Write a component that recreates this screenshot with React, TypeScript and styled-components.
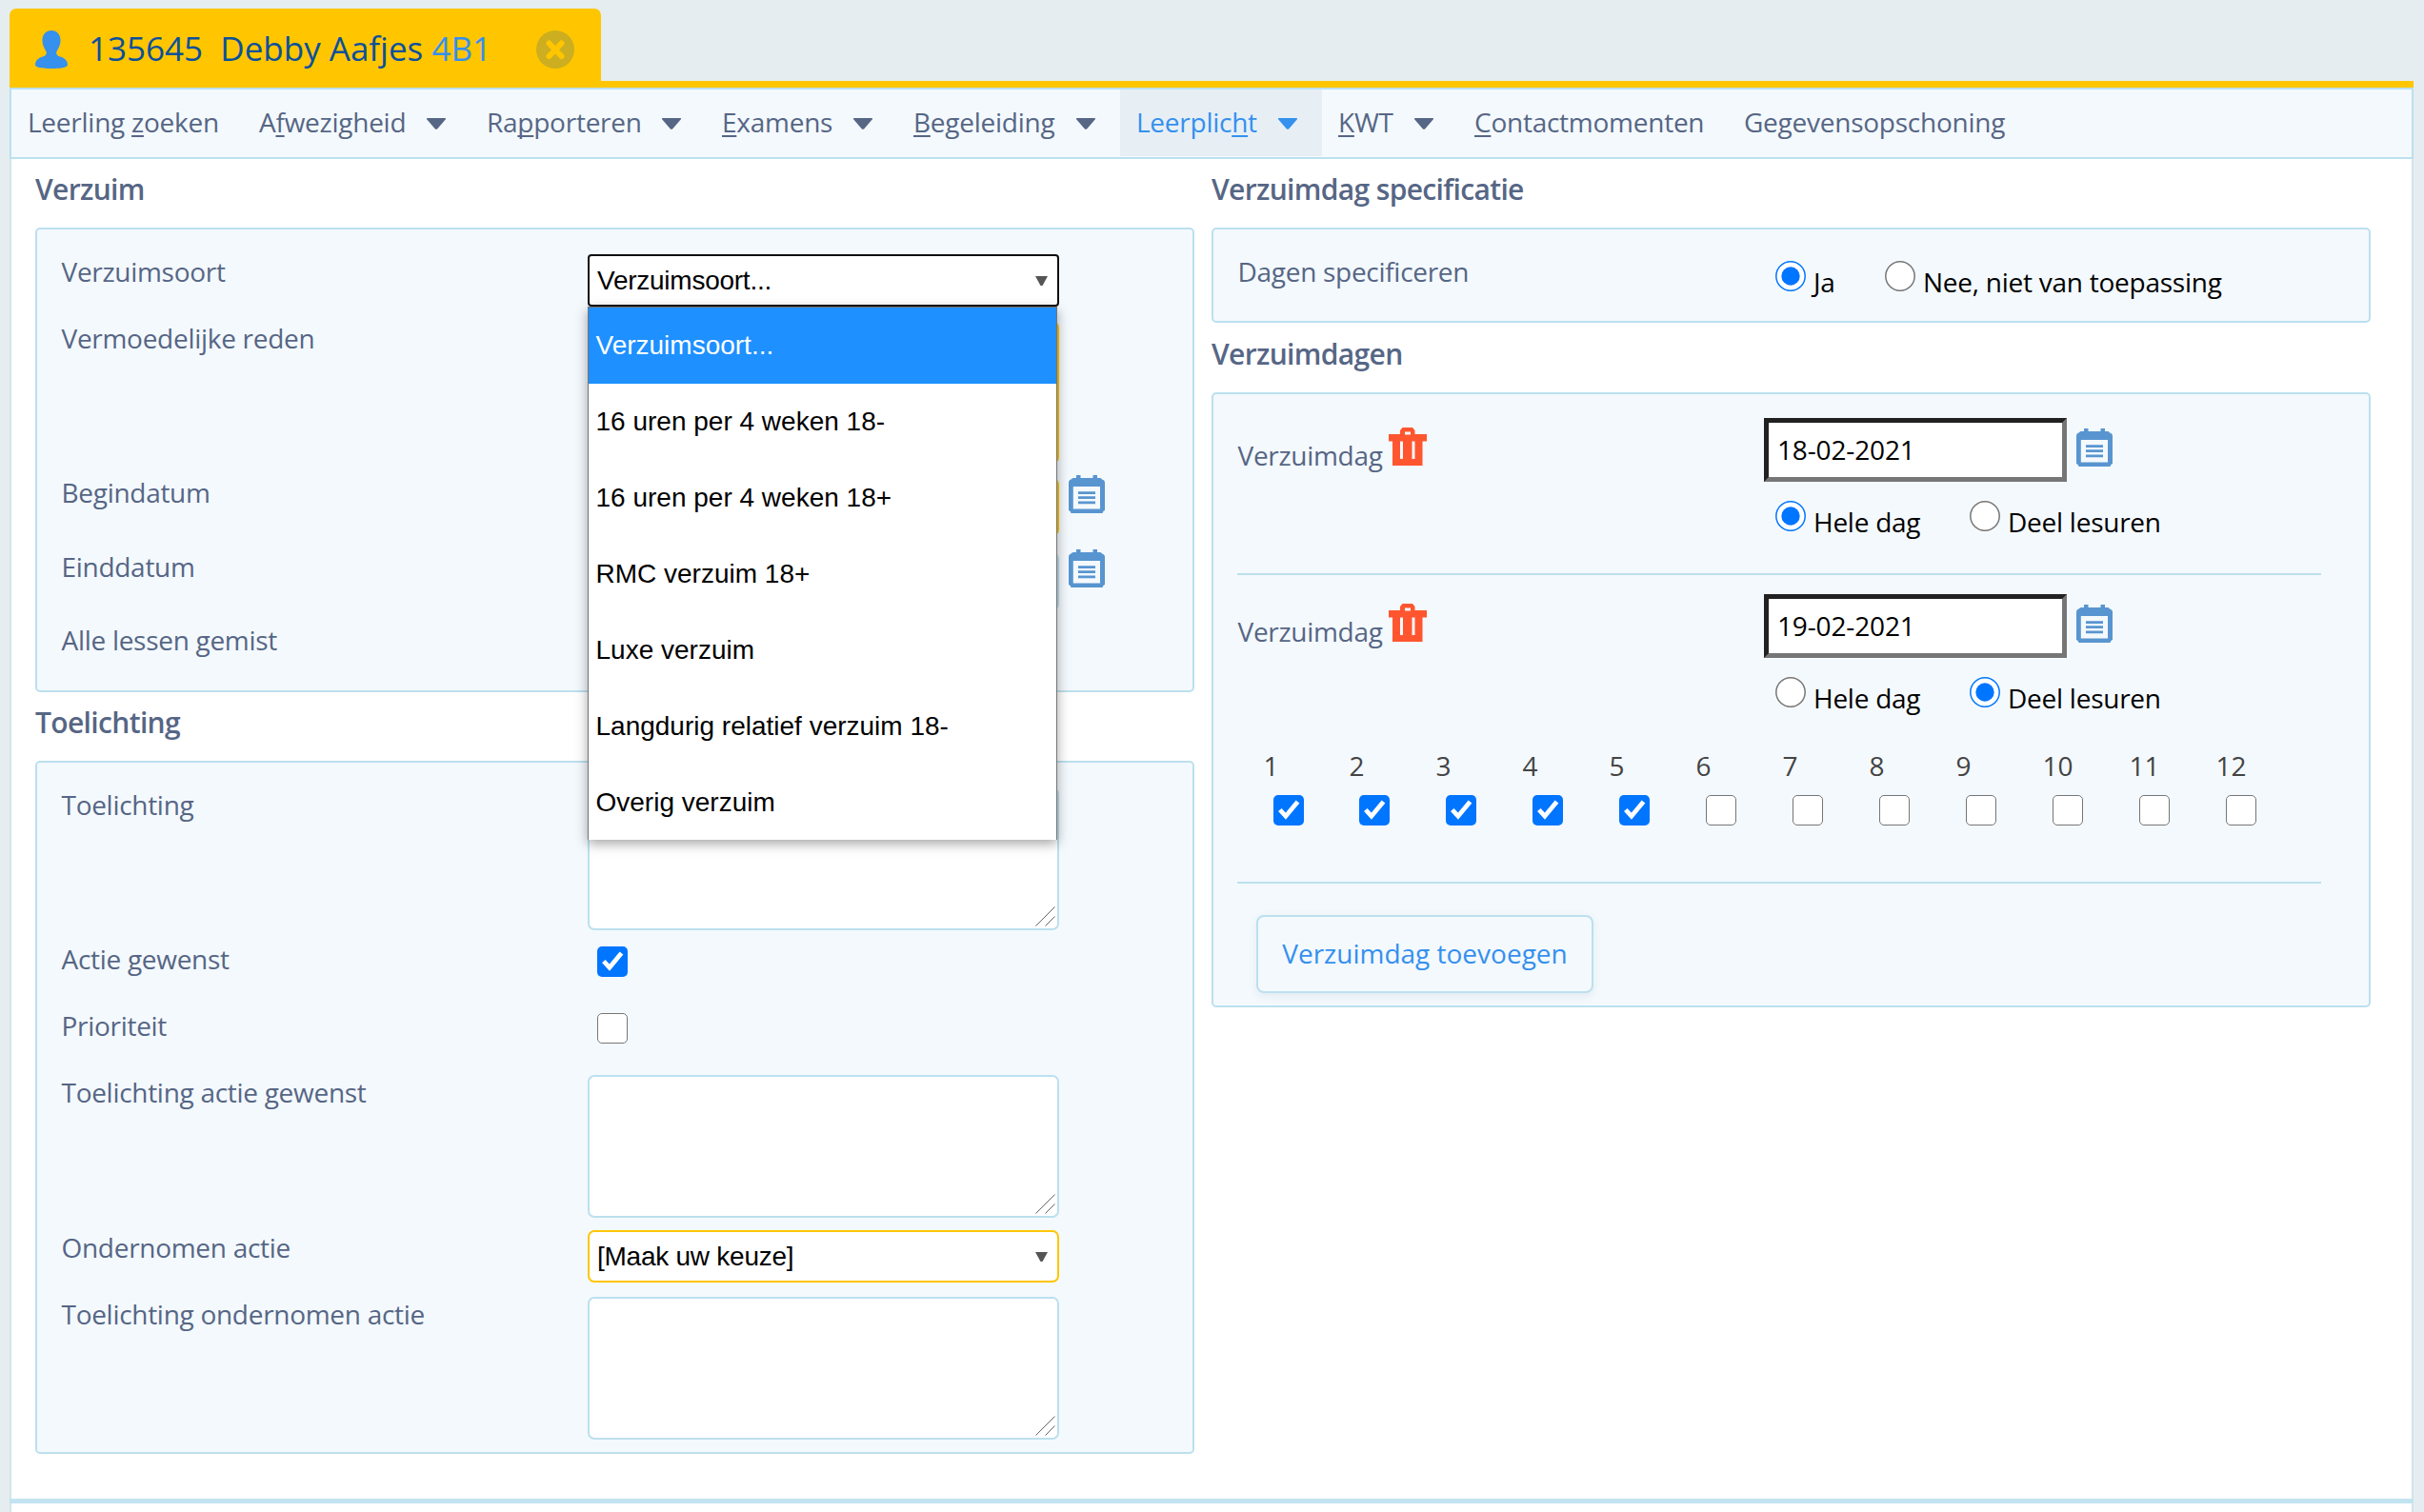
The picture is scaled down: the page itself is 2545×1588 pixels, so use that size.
import React from 'react';
import styled, { createGlobalStyle } from 'styled-components';

const c = {
  page: '#e5edf0',
  edge: '#d3e4ea',
  panel: '#f4f9fd',
  line: '#bce0ee',
  yellow: '#ffc600',
  label: '#566685',
  blue: '#3590ee',
  navy: '#0b509c',
  check: '#0075ff',
};

const Global = createGlobalStyle`
  * { box-sizing: border-box; }
  body { margin: 0; background: ${c.page}; font-family: "Open Sans", "Noto Sans", sans-serif; font-size: 28px; line-height: 36px; color: ${c.label}; }
`;

const Page = styled.div`
  display: flex;
  flex-direction: column;
  width: 2545px;
  height: 1588px;
  padding: 9px 11px 0 10px;
  overflow: hidden;
`;

const TabStrip = styled.header`
  display: flex;
  flex: none;
  height: 83px;
  border-bottom: 7px solid ${c.yellow};
`;

const Tab = styled.div`
  display: flex;
  width: 621px;
  padding: 23px 27px 0;
  background: ${c.yellow};
  border-radius: 7px 7px 0 0;
  svg { flex: none; display: block; }
`;

const TabTitle = styled.div`
  display: flex;
  width: 470px;
  margin: -4px 0 0 22px;
  font-size: 35px;
  line-height: 46px;
  color: ${c.navy};
  white-space: pre;
`;

const ClassName = styled.span`
  color: ${c.blue};
`;

const Nav = styled.nav`
  display: flex;
  flex: none;
  height: 75px;
  background: ${c.panel};
  border: 2px solid ${c.line};
`;

const NavItem = styled.a<{ $active?: boolean; $width: number }>`
  display: flex;
  flex: none;
  height: 70px;
  width: ${(p) => p.$width}px;
  padding: 16px 26px 0 17px;
  justify-content: space-between;
  white-space: nowrap;
  letter-spacing: -0.25px;
  color: ${(p) => (p.$active ? c.blue : c.label)};
  background: ${(p) => (p.$active ? '#e7eff5' : 'transparent')};
  u { text-decoration-thickness: 2px; text-underline-offset: 3px; text-decoration-skip-ink: none; }
  svg { flex: none; margin-top: 14px; }
`;

const Body = styled.main`
  display: flex;
  flex: none;
  gap: 18px;
  height: 1407px;
  padding-left: 25px;
  background: #fff;
  border: 2px solid ${c.edge};
  border-width: 0 2px;
`;

const Footer = styled.footer`
  flex: 1;
  background: #fff;
  border-top: 5px solid #c2e3f0;
  box-shadow: inset 2px 0 ${c.edge}, inset -2px 0 ${c.edge};
`;

const Column = styled.section`
  width: 1217px;
`;

const Heading = styled.h2<{ $tall?: boolean }>`
  height: ${(p) => (p.$tall ? 73 : 72)}px;
  margin: 0;
  padding-top: ${(p) => (p.$tall ? 13 : 12)}px;
  font-size: 30px;
  line-height: 40px;
  font-weight: 600;
  letter-spacing: -0.65px;
`;

const Panel = styled.div<{ $top?: number; $height?: number }>`
  height: ${(p) => (p.$height ? `${p.$height}px` : 'auto')};
  padding: ${(p) => p.$top ?? 26}px 25px 0;
  background: ${c.panel};
  border: 2px solid ${c.line};
  border-radius: 5px;
`;

const Row = styled.div<{ $height: number }>`
  display: grid;
  grid-template-columns: 553px 1fr;
  align-items: start;
  height: ${(p) => p.$height}px;
`;

const Label = styled.div`
  display: flex;
  padding-left: 0.5px;
  white-space: nowrap;
  letter-spacing: -0.29px;
`;

const FieldWrap = styled.div`
  position: relative;
  display: flex;
`;

const SelectBox = styled.div<{ $open?: boolean }>`
  display: flex;
  justify-content: space-between;
  width: 495px;
  height: 55px;
  padding: 0 10px 0 8px;
  font-family: "Liberation Sans", Arial, sans-serif;
  line-height: 52px;
  letter-spacing: -0.25px;
  color: #000;
  background: #fff;
  border: 2px solid ${(p) => (p.$open ? '#101010' : c.yellow)};
  border-radius: ${(p) => (p.$open ? 4 : 7)}px;
  svg { margin-top: 21px; }
`;

const Area = styled.div<{ $required?: boolean }>`
  display: flex;
  align-items: flex-end;
  justify-content: flex-end;
  width: 495px;
  height: 150px;
  padding: 0 2px 2px 0;
  background: #fff;
  border: 2px solid ${(p) => (p.$required ? c.yellow : c.line)};
  border-radius: 7px;
`;

const TextInput = styled.div<{ $required?: boolean }>`
  width: 495px;
  height: 61px;
  margin: 3px 10px 0 0;
  background: #fff;
  border: 2px solid ${(p) => (p.$required ? c.yellow : c.line)};
  border-radius: 7px;
`;

const Options = styled.ul`
  position: absolute;
  z-index: 2;
  top: 55px;
  left: 0;
  width: 493px;
  height: 560px;
  margin: 0;
  padding: 0;
  list-style: none;
  overflow: visible;
  background: #fff;
  border: 1px solid #757575;
  border-bottom: 0;
  box-shadow: 0 4px 12px rgba(0, 0, 0, 0.36);
`;

const Option = styled.li<{ $selected?: boolean }>`
  height: 80px;
  padding-left: 7.5px;
  font-family: "Liberation Sans", Arial, sans-serif;
  line-height: 79px;
  white-space: nowrap;
  color: ${(p) => (p.$selected ? '#fff' : '#000')};
  background: ${(p) => (p.$selected ? '#1e90ff' : 'transparent')};
  &:last-child { height: 79px; }
`;

const Box = styled.span<{ $on?: boolean }>`
  display: block;
  flex: none;
  width: 32px;
  height: 32px;
  background: ${(p) => (p.$on ? c.check : '#fff')};
  border: ${(p) => (p.$on ? '0' : '1.5px solid #767676')};
  border-radius: 5px;
  svg { display: block; }
`;

const FormCheck = styled.div`
  padding: 5px 0 0 10px;
`;

const Radios = styled.div<{ $top: number }>`
  display: flex;
  margin: ${(p) => p.$top}px 0 0 12px;
  color: #000;
`;

const RadioItem = styled.div<{ $width: number }>`
  display: flex;
  gap: 8px;
  width: ${(p) => p.$width}px;
  white-space: nowrap;
  letter-spacing: -0.25px;
  span { margin-top: 4px; }
  svg { display: block; flex: none; }
`;

const DayBlock = styled.div<{ $height: number }>`
  width: 1138px;
  height: ${(p) => p.$height}px;
  padding-top: 20px;
  border-bottom: 2px solid ${c.line};
`;

const DayGrid = styled.div`
  display: grid;
  grid-template-columns: 553px 1fr;
  align-items: start;
`;

const DayLabel = styled.div`
  display: flex;
  letter-spacing: -0.29px;
  span { padding: 21px 0 0 0.5px; width: 159px; }
  svg { margin-top: 10px; }
`;

const DateRow = styled.div`
  display: flex;
  gap: 10px;
  svg { margin-top: 11px; }
`;

const DateInput = styled.div`
  width: 318px;
  height: 67px;
  padding: 10px 9px 0;
  color: #000;
  letter-spacing: -0.15px;
  background: #fff;
  border: 5px solid;
  border-color: #212121 #767676 #767676 #212121;
`;

const Hours = styled.div`
  display: grid;
  grid-template-columns: repeat(12, 91px);
  margin: 35px 0 0 26px;
  color: #444;
`;

const Hour = styled.div`
  display: flex;
  flex-direction: column;
  gap: 13px;
  padding-left: 0.5px;
  ${Box} { margin-left: 10.5px; }
  &:first-child { padding-left: 1.5px; }
`;

const AddButton = styled.button`
  display: block;
  width: 354px;
  height: 82px;
  margin: 33px 0 0 20px;
  padding: 0 0 2px;
  font: inherit;
  color: ${c.blue};
  white-space: nowrap;
  background: ${c.panel};
  border: 2px solid ${c.line};
  border-radius: 8px;
  box-shadow: 0 3px 10px rgba(60, 110, 130, 0.1);
`;

const Person = () => (
  <svg width="34" height="40" viewBox="0 0 34 40" fill={c.blue}>
    <path d="M17 0C23 0 26.5 4.5 26.5 10C26.5 15.500 24.500 18.500 22.500 22C21.600 25 23 26.500 26 27.500C31 29 34 31.500 34 36C34 39.500 25 40 17 40C9 40 0 39.500 0 36C0 31.500 3 29 8 27.500C11 26.500 12.400 25 11.500 22C9.500 18.500 7.500 15.500 7.500 10C7.500 4.500 11 0 17 0Z" />
  </svg>
);

const Close = () => (
  <svg width="40" height="40" viewBox="0 0 40 40">
    <circle cx="20" cy="20" r="20" fill="#ccae20" />
    <path d="M13.500 13.500L26.500 27M26.500 13.500L13.500 27" stroke={c.yellow} strokeWidth="6" strokeLinecap="round" />
  </svg>
);

const Caret = () => (
  <svg width="20" height="12" viewBox="0 0 20 12" fill="currentColor">
    <path d="M0.500 0H19.500Q20.500 0.500 19.700 1.600L11.300 11.200Q10 12.400 8.700 11.200L0.300 1.600Q-0.500 0.500 0.500 0Z" />
  </svg>
);

const SelectArrow = () => (
  <svg width="13" height="10" viewBox="0 0 13 10">
    <path d="M0 0H13L7.500 10H5.500Z" fill="#555" />
  </svg>
);

const Grip = () => (
  <svg width="21" height="21" viewBox="0 0 21 21" stroke="#555" strokeWidth="0.900">
    <path d="M0.500 20.500L20.500 0.500M10.500 20.500L20.500 10.500" />
  </svg>
);

const Calendar = () => (
  <svg width="38" height="40" viewBox="0 0 38 40">
    <path d="M8 0H12.500V3H25.500V0H30V3H33Q34.500 3 35 4.500Q38 5 38 8V37Q36 37.500 35.500 40H2.500Q2 37.500 0 37V8Q0 5 2.500 4.500Q3.500 3 5 3H8Z" fill="#5895d0" />
    <path d="M4.800 12H33V35.500H4.800Z" fill={c.panel} />
    <path d="M10 18.700H28M10 23.700H28M10 28.800H28" stroke="#5895d0" strokeWidth="2.800" />
  </svg>
);

const Trash = () => (
  <svg width="40" height="40" viewBox="0 0 40 40">
    <path fillRule="evenodd" fill="#ff5630" d="M14.500 0H25L27.500 3V7H40V14.500H35.500V40H4V14.500H0V7H12V3ZM17 4.500V7.500H23V4.500ZM12 14.500V33H15V14.500ZM24.500 14.500V33H27.500V14.500Z" />
  </svg>
);

const Check = ({ on }: { on?: boolean }) => (
  <Box $on={on}>
    {on && (
      <svg width="32" height="32" viewBox="0 0 32 32">
        <path d="M6.800 15.500L12.900 22.200L25.500 7" fill="none" stroke="#fff" strokeWidth="4.800" />
      </svg>
    )}
  </Box>
);

const Radio = ({ on, width, children }: { on?: boolean; width: number; children: string }) => (
  <RadioItem $width={width}>
    <svg width="32" height="32" viewBox="0 0 32 32">
      <circle cx="16" cy="16" r="15.200" fill="#fff" stroke={on ? c.check : '#767676'} strokeWidth="1.500" />
      {on && <circle cx="16" cy="16" r="9.700" fill={c.check} />}
    </svg>
    <span>{children}</span>
  </RadioItem>
);

const menu: { text: [string, string, string]; width: number; caret?: boolean; active?: boolean }[] = [
  { text: ['Leerling ', 'z', 'oeken'], width: 243 },
  { text: ['A', 'f', 'wezigheid'], width: 239, caret: true },
  { text: ['Ra', 'p', 'porteren'], width: 247, caret: true },
  { text: ['', 'E', 'xamens'], width: 201, caret: true },
  { text: ['', 'B', 'egeleiding'], width: 234, caret: true },
  { text: ['Leerplic', 'h', 't'], width: 212, caret: true, active: true },
  { text: ['', 'K', 'WT'], width: 143, caret: true },
  { text: ['', 'C', 'ontactmomenten'], width: 283 },
  { text: ['Gegevensopschoning', '', ''], width: 320 },
];

const options = [
  'Verzuimsoort...',
  '16 uren per 4 weken 18-',
  '16 uren per 4 weken 18+',
  'RMC verzuim 18+',
  'Luxe verzuim',
  'Langdurig relatief verzuim 18-',
  'Overig verzuim',
];

const Day = ({ date, whole, height, children }: { date: string; whole?: boolean; height: number; children?: React.ReactNode }) => (
  <DayBlock $height={height}>
    <DayGrid>
      <DayLabel>
        <span>Verzuimdag</span>
        <Trash />
      </DayLabel>
      <div>
        <DateRow>
          <DateInput>{date}</DateInput>
          <Calendar />
        </DateRow>
        <Radios $top={20}>
          <Radio on={whole} width={204}>Hele dag</Radio>
          <Radio on={!whole} width={240}>Deel lesuren</Radio>
        </Radios>
      </div>
    </DayGrid>
    {children}
  </DayBlock>
);

export default function App() {
  return (
    <>
      <Global />
      <Page>
        <TabStrip>
          <Tab>
            <Person />
            <TabTitle>
              {'135645  Debby Aafjes '}
              <ClassName>4B1</ClassName>
            </TabTitle>
            <Close />
          </Tab>
        </TabStrip>
        <Nav>
          {menu.map(({ text, width, caret, active }) => (
            <NavItem key={text.join('')} $width={width} $active={active}>
              <span>
                {text[0]}
                <u>{text[1]}</u>
                {text[2]}
              </span>
              {caret && <Caret />}
            </NavItem>
          ))}
        </Nav>
        <Body>
          <Column>
            <Heading>Verzuim</Heading>
            <Panel $height={488}>
              <Row $height={70}>
                <Label>Verzuimsoort</Label>
                <FieldWrap>
                  <SelectBox $open>
                    Verzuimsoort...
                    <SelectArrow />
                  </SelectBox>
                  <Options>
                    {options.map((o, i) => (
                      <Option key={o} $selected={i === 0}>{o}</Option>
                    ))}
                  </Options>
                </FieldWrap>
              </Row>
              <Row $height={162}>
                <Label>Vermoedelijke reden</Label>
                <Area $required />
              </Row>
              <Row $height={78}>
                <Label>Begindatum</Label>
                <FieldWrap>
                  <TextInput $required />
                  <Calendar />
                </FieldWrap>
              </Row>
              <Row $height={77}>
                <Label>Einddatum</Label>
                <FieldWrap>
                  <TextInput />
                  <Calendar />
                </FieldWrap>
              </Row>
              <Row $height={71}>
                <Label>Alle lessen gemist</Label>
              </Row>
            </Panel>
            <Heading>Toelichting</Heading>
            <Panel $height={728}>
              <Row $height={162}>
                <Label>Toelichting</Label>
                <Area><Grip /></Area>
              </Row>
              <Row $height={70}>
                <Label>Actie gewenst</Label>
                <FormCheck><Check on /></FormCheck>
              </Row>
              <Row $height={70}>
                <Label>Prioriteit</Label>
                <FormCheck><Check /></FormCheck>
              </Row>
              <Row $height={163}>
                <Label>Toelichting actie gewenst</Label>
                <Area><Grip /></Area>
              </Row>
              <Row $height={70}>
                <Label>Ondernomen actie</Label>
                <SelectBox>
                  [Maak uw keuze]
                  <SelectArrow />
                </SelectBox>
              </Row>
              <Row $height={163}>
                <Label>Toelichting ondernomen actie</Label>
                <Area><Grip /></Area>
              </Row>
            </Panel>
          </Column>
          <Column>
            <Heading>Verzuimdag specificatie</Heading>
            <Panel $height={100}>
              <Row $height={70}>
                <Label>Dagen specificeren</Label>
                <Radios $top={7}>
                  <Radio on width={115}>Ja</Radio>
                  <Radio width={380}>Nee, niet van toepassing</Radio>
                </Radios>
              </Row>
            </Panel>
            <Heading $tall>Verzuimdagen</Heading>
            <Panel $top={5} $height={646}>
              <Day date="18-02-2021" whole height={185} />
              <Day date="19-02-2021" height={324}>
                <Hours>
                  {Array.from({ length: 12 }, (_, i) => (
                    <Hour key={i}>
                      {i + 1}
                      <Check on={i < 5} />
                    </Hour>
                  ))}
                </Hours>
              </Day>
              <AddButton>Verzuimdag toevoegen</AddButton>
            </Panel>
          </Column>
        </Body>
        <Footer />
      </Page>
    </>
  );
}
